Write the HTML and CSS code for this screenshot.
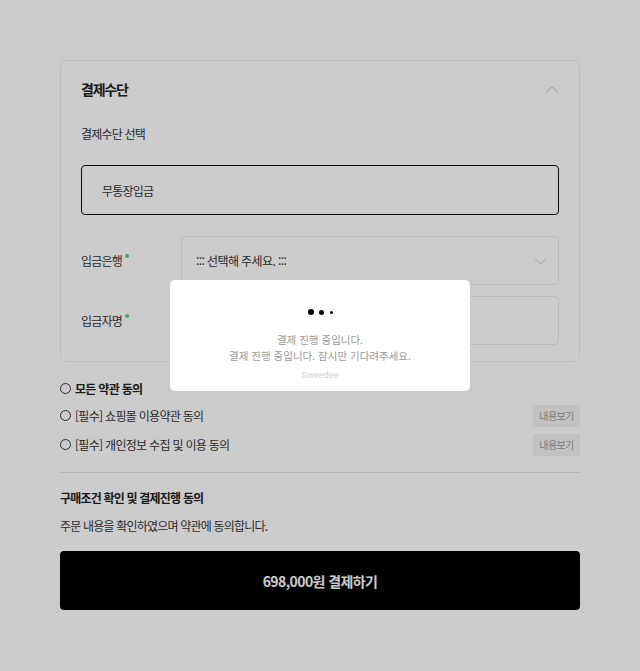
FILE: index.html
```html
<!DOCTYPE html>
<html lang="ko">
<head>
<meta charset="utf-8">
<title>결제</title>
<link rel="stylesheet" href="styles.css">
</head>
<body>
<div class="page">
  <section class="card">
    <div class="card-head">
      <h2 class="card-title">결제수단</h2>
      <svg class="chev" width="14" height="8" viewBox="0 0 14 8"><path d="M1 7.5L7 1.5L13 7.5" fill="none" stroke="#bdbdbd" stroke-width="1"/></svg>
    </div>
    <div class="sub-label">결제수단 선택</div>
    <div class="method">무통장입금</div>
    <div class="field-row">
      <div class="field-label">입금은행<span class="req"></span></div>
      <div class="field-box select">
        <span>::: 선택해 주세요. :::</span>
        <svg class="chev-down" width="13" height="8" viewBox="0 0 13 8"><path d="M1 1.5L6.5 7L12 1.5" fill="none" stroke="#c4c4c4" stroke-width="1"/></svg>
      </div>
    </div>
    <div class="field-row">
      <div class="field-label">입금자명<span class="req"></span></div>
      <div class="field-box"></div>
    </div>
  </section>

  <ul class="terms">
    <li class="term all"><span class="radio"></span>모든 약관 동의</li>
    <li class="term"><span class="radio"></span>[필수] 쇼핑몰 이용약관 동의<button class="view">내용보기</button></li>
    <li class="term"><span class="radio"></span>[필수] 개인정보 수집 및 이용 동의<button class="view">내용보기</button></li>
  </ul>

  <div class="confirm">
    <div class="confirm-title">구매조건 확인 및 결제진행 동의</div>
    <div class="confirm-text">주문 내용을 확인하였으며 약관에 동의합니다.</div>
  </div>

  <button class="pay">698,000원 결제하기</button>
</div>

<div class="overlay">
  <div class="modal">
    <div class="dots"><span class="d1"></span><span class="d2"></span><span class="d3"></span></div>
    <p class="msg">결제 진행 중입니다.</p>
    <p class="msg">결제 진행 중입니다. 잠시만 기다려주세요.</p>
    <p class="brand">Sweedee</p>
  </div>
</div>
</body>
</html>
```

FILE: styles.css
```css
* { box-sizing: border-box; }
html, body { margin: 0; padding: 0; }
body {
  background: #fff;
  font-family: "Noto Sans CJK KR", "Noto Sans", sans-serif;
  color: #333;
  width: 640px;
  height: 671px;
  overflow: hidden;
}
.page {
  padding: 60px 60px 0;
}
.card {
  border: 1px solid #efefef;
  border-radius: 6px;
  padding: 0 20px 16px;
}
.card-head {
  display: flex;
  align-items: center;
  justify-content: space-between;
  height: 54px;
  padding-top: 1px;
}
.card-title {
  margin: 0;
  font-size: 14px;
  font-weight: 700;
  letter-spacing: -1.2px;
  color: #222;
}
.sub-label {
  font-size: 12px;
  letter-spacing: -0.8px;
  color: #333;
  margin-top: 9px;
  line-height: 20px;
}
.method {
  margin-top: 21px;
  height: 50px;
  border: 1px solid #111;
  border-radius: 4px;
  display: flex;
  align-items: center;
  padding-left: 20px;
  font-size: 12px;
  letter-spacing: -0.8px;
  color: #333;
}
.field-row {
  display: flex;
  align-items: center;
  margin-top: 11px;
}
.method + .field-row { margin-top: 21px; }
.field-label {
  width: 100px;
  font-size: 12px;
  letter-spacing: -0.8px;
  color: #333;
}
.req {
  display: inline-block;
  width: 4px;
  height: 4px;
  border-radius: 50%;
  background: #4cd964;
  vertical-align: top;
  margin: 2px 0 0 3px;
}
.field-box {
  flex: 1;
  height: 49px;
  border: 1px solid #eaeaea;
  border-radius: 5px;
  display: flex;
  align-items: center;
  justify-content: space-between;
  padding: 0 11px 0 14px;
  font-size: 12px;
  letter-spacing: -0.6px;
  color: #333;
}
.terms {
  list-style: none;
  margin: 15px 0 0;
  padding: 0;
}
.term {
  display: flex;
  align-items: center;
  height: 29px;
  font-size: 12px;
  letter-spacing: -0.7px;
  color: #333;
}
.term.all { font-weight: 700; color: #222; height: 22px; margin-bottom: 2px; }
.radio {
  width: 11px;
  height: 11px;
  border: 1px solid #333;
  border-radius: 50%;
  margin-right: 4px;
  flex: none;
}
.view {
  margin-left: auto;
  height: 22px;
  width: 47px;
  border: 0;
  border-radius: 2px;
  background: #f3f3f3;
  color: #9a9a9a;
  font-family: inherit;
  font-size: 10px;
  letter-spacing: -0.6px;
  padding: 0;
}
.confirm {
  margin-top: 13px;
  border-top: 1px solid #e6e6e6;
  padding-top: 15px;
}
.confirm-title {
  font-size: 12px;
  font-weight: 700;
  letter-spacing: -0.8px;
  color: #222;
  line-height: 20px;
}
.confirm-text {
  margin-top: 8px;
  font-size: 12px;
  letter-spacing: -0.8px;
  color: #333;
  line-height: 20px;
}
.pay {
  display: block;
  width: 100%;
  height: 59px;
  margin-top: 15px;
  background: #000;
  color: #fff;
  border: 0;
  border-radius: 4px;
  font-family: inherit;
  font-size: 14px;
  font-weight: 700;
  letter-spacing: -0.6px;
}
.overlay {
  position: fixed;
  inset: 0;
  background: rgba(0, 0, 0, 0.2);
  display: flex;
  align-items: center;
  justify-content: center;
}
.modal {
  width: 300px;
  height: 111px;
  background: #fff;
  border-radius: 5px;
  text-align: center;
  padding-top: 29px;
}
.dots {
  display: flex;
  justify-content: center;
  align-items: center;
  gap: 5px;
  height: 6px;
  margin-bottom: 17px;
}
.dots span { display: block; border-radius: 50%; background: #000; }
.d1 { width: 6px; height: 6px; }
.d2 { width: 5px; height: 5px; }
.d3 { width: 3px; height: 3px; margin-left: 1px; }
.msg {
  margin: 0;
  font-size: 10.5px;
  line-height: 16px;
  color: #999;
  letter-spacing: 0;
}
.brand {
  margin: 5px 0 0;
  font-family: "Liberation Sans", Arial, sans-serif;
  font-size: 9px;
  color: #cfcfcf;
  line-height: 12px;
}
```
